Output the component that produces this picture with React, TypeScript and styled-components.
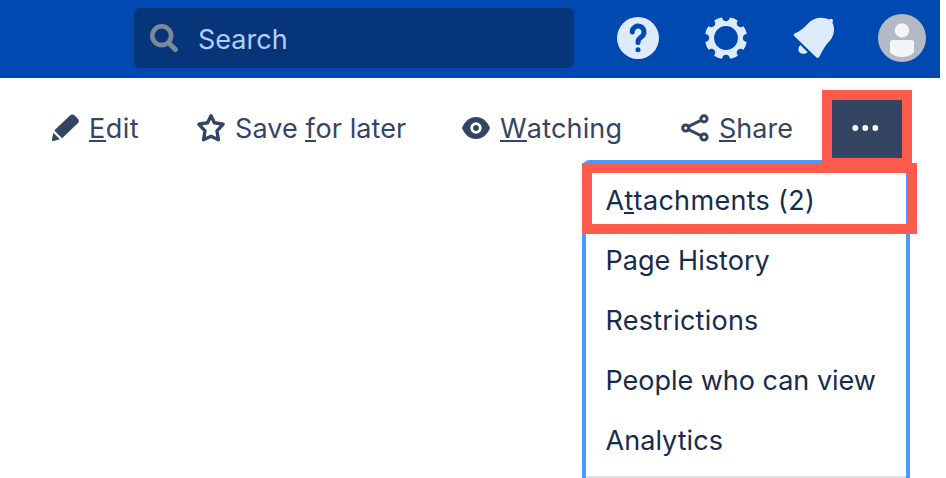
import React from "react";
import styled, { createGlobalStyle } from "styled-components";

const GlobalStyle = createGlobalStyle`
  *, *::before, *::after { box-sizing: border-box; }
  html, body { margin: 0; background: #fff; overflow: hidden; }
  body { font-family: Inter, "Liberation Sans", sans-serif; font-size: 27px; }
`;

const Page = styled.div`
  position: relative;
  width: 946px;
  height: 478px;
  overflow: hidden;
  background: #fff;
`;

const Header = styled.header`
  display: flex;
  align-items: center;
  width: 940px;
  height: 78px;
  padding: 0 14px 2px 134px;
  background: #0049b0;
  box-shadow: inset 0 -1px #0747a6;
`;

const SearchBox = styled.div`
  display: flex;
  align-items: center;
  width: 440px;
  height: 60px;
  padding-left: 15px;
  border-radius: 6px;
  background: #07357a;
  color: #b3cff5;
  svg { flex: none; margin-right: 19px; }
`;

const SearchText = styled.span`
  padding-top: 3px;
  line-height: 32px;
`;

const HeaderIcons = styled.div`
  display: flex;
  align-items: center;
  gap: 40px;
  margin-left: 40px;
  svg { display: block; flex: none; }
`;

const Toolbar = styled.nav`
  display: flex;
  height: 100px;
  padding-top: 12px;
  color: #344563;
`;

const Action = styled.div<{ $width: number; $gap: number }>`
  display: flex;
  align-items: center;
  flex: none;
  width: ${(p) => p.$width}px;
  height: 76px;
  gap: ${(p) => p.$gap}px;
  svg { flex: none; }
`;

const Actions = styled.div`
  display: flex;
  width: 822px;
  padding-left: 50px;
`;

const Label = styled.span<{ $spacing: number }>`
  padding-top: 2px;
  white-space: nowrap;
  line-height: 32px;
  letter-spacing: ${(p) => p.$spacing}px;
`;

const AccessKey = styled.span`
  display: inline-block;
  height: 32px;
  background: linear-gradient(currentColor, currentColor) 0 27px / 100% 2px no-repeat;
`;

const MoreButton = styled.button`
  position: relative;
  z-index: 1;
  display: flex;
  align-items: center;
  justify-content: center;
  width: 90px;
  height: 78px;
  padding: 0 4px 2px 0;
  border: 10px solid #ff5a4b;
  background: #344563;
`;

const Menu = styled.ul`
  position: absolute;
  left: 582px;
  top: 160px;
  width: 328px;
  height: 340px;
  margin: 0;
  padding: 7px 0 0;
  list-style: none;
  border: solid #4c9aff;
  border-width: 3px 4px;
  border-radius: 8px;
  background: #fff;
  color: #172b4d;
`;

const MenuItem = styled.li`
  display: flex;
  align-items: center;
  height: 60px;
  padding-left: 19.5px;
`;

const Divider = styled.li`
  height: 2px;
  margin-top: 6px;
  background: #dfe1e6;
`;

const Highlight = styled.div`
  position: absolute;
  left: 582px;
  top: 163px;
  width: 335px;
  height: 71px;
  border: 10px solid #ff5a4b;
`;

const SearchIcon = () => (
  <svg width="30" height="30" viewBox="0 0 30 30" fill="none" stroke="#7b899c" strokeLinecap="round">
    <circle cx="12.7" cy="12.7" r="9.4" strokeWidth="4.6" />
    <path d="M20 20.2L26.4 26.6" strokeWidth="5" />
  </svg>
);

const HelpIcon = () => (
  <svg width="48" height="48" viewBox="0 0 48 48">
    <circle cx="24" cy="24" r="21" fill="#deebff" />
    <path d="M18.2 18a5.9 5.9 0 1 1 9.9 4.3c-2 2-4.1 2.5-4.1 5.5v.8" fill="none" stroke="#0049b0" strokeWidth="5" strokeLinecap="round" />
    <circle cx="24" cy="35.7" r="2.5" fill="#0049b0" />
  </svg>
);

const GearIcon = () => (
  <svg width="48" height="48" viewBox="-24 -24 48 48">
    <circle r="16.5" fill="none" stroke="#deebff" strokeWidth="9.2" />
    {[0, 45, 90, 135, 180, 225, 270, 315].map((a) => (
      <path key={a} transform={`rotate(${a})`} d="M-5 -24L-3.9 -20.2Q-3 -16.8 0 -16.8T3.9 -20.2L5 -24Z" fill="#0049b0" />
    ))}
  </svg>
);

const BellIcon = () => (
  <svg width="48" height="48" viewBox="790 14 48 48" fill="#deebff">
    <path d="M794.2 33.8C800 31.5 804.5 27.5 808 23.5C813.5 17 822.5 16.2 829.2 19.6Q831.2 18.2 832.5 19.2Q833.6 20.5 832.4 22.8C835 28 834.6 34.5 830.3 40.2C825.3 45 822.4 50.5 819.5 56.5Q818 59 816.2 57.3L794.2 36.1Q793 34.8 794.2 33.8Z" />
    <path d="M800.4 45L807.6 52.2C803.5 55.4 798.5 53.2 798.4 49.4Q798.4 46.6 800.4 45Z" />
  </svg>
);

const AvatarIcon = () => (
  <svg width="48" height="48" viewBox="0 0 48 48">
    <circle cx="24" cy="24" r="24" fill="#b3bac5" />
    <circle cx="24" cy="16.5" r="7.2" fill="#f4f5f7" />
    <path d="M12 28.5Q12 26 14.5 26H33.5Q36 26 36 28.5V38.5Q31 43 24 43T12 38.5Z" fill="#f4f5f7" />
  </svg>
);

const PencilIcon = () => (
  <svg width="32" height="32" viewBox="50 112 32 32" fill="#344563">
    <path d="M69.7 115.8Q72.4 113.5 74.7 115.6L77.6 118.4Q80.1 120.8 77.8 123.3L62.1 138.3L54.2 130.6Z" />
    <path d="M53.3 132.7L59.9 139.2L53.7 141Q51.5 141.3 52 139.2Z" />
  </svg>
);

const StarIcon = () => (
  <svg width="32" height="32" viewBox="195 112 32 32" fill="none" stroke="#344563" strokeWidth="3.4" strokeLinejoin="round">
    <path d="M211 115.8L214.4 122.8L223.1 124.3L217 130.8L218.4 139.7L211 136.3L203.6 139.7L205 130.8L198.9 124.3L207.6 122.8Z" />
  </svg>
);

const EyeIcon = () => (
  <svg width="32" height="32" viewBox="460 112 32 32">
    <path d="M462 128C464.5 121.5 469.5 117 476 117S487.5 121.5 490 128C487.5 134.5 482.5 139 476 139S464.5 134.5 462 128Z" fill="#344563" />
    <circle cx="476" cy="128" r="4.3" fill="none" stroke="#fff" strokeWidth="2.8" />
  </svg>
);

const ShareIcon = () => (
  <svg width="32" height="32" viewBox="679 112 32 32" fill="none" stroke="#344563" strokeWidth="3">
    <circle cx="685.7" cy="128" r="3.1" />
    <circle cx="704" cy="118.8" r="3.1" />
    <circle cx="704" cy="137" r="3.1" />
    <path d="M688.5 126.4L701 120.3M688.5 129.6L701 135.6" />
  </svg>
);

const DotsIcon = () => (
  <svg width="28" height="8" viewBox="0 0 28 8" fill="#fff">
    <circle cx="4.3" cy="4" r="2.9" />
    <circle cx="14.3" cy="4" r="2.9" />
    <circle cx="24.3" cy="4" r="2.9" />
  </svg>
);

const menuItems = [
  { text: "Page History", spacing: 0.05 },
  { text: "Restrictions", spacing: 0.25 },
  { text: "People who can view", spacing: -0.02 },
  { text: "Analytics", spacing: 0.05 },
];

export default function App() {
  return (
    <>
      <GlobalStyle />
      <Page>
        <Header>
          <SearchBox>
            <SearchIcon />
            <SearchText>Search</SearchText>
          </SearchBox>
          <HeaderIcons>
            <HelpIcon />
            <GearIcon />
            <BellIcon />
            <AvatarIcon />
          </HeaderIcons>
        </Header>
        <Toolbar>
          <Actions>
            <Action $width={145} $gap={7}>
              <PencilIcon />
              <Label $spacing={0.5}><AccessKey>E</AccessKey>dit</Label>
            </Action>
            <Action $width={265} $gap={8}>
              <StarIcon />
              <Label $spacing={0.08}>Save <AccessKey>f</AccessKey>or later</Label>
            </Action>
            <Action $width={219} $gap={8}>
              <EyeIcon />
              <Label $spacing={0.18}><AccessKey>W</AccessKey>atching</Label>
            </Action>
            <Action $width={120} $gap={8}>
              <ShareIcon />
              <Label $spacing={0}><AccessKey>S</AccessKey>hare</Label>
            </Action>
          </Actions>
          <MoreButton aria-label="More actions"><DotsIcon /></MoreButton>
        </Toolbar>
        <Menu>
          <MenuItem><Label $spacing={0.32}>A<AccessKey>t</AccessKey>tachments (2)</Label></MenuItem>
          {menuItems.map((item) => (
            <MenuItem key={item.text}><Label $spacing={item.spacing}>{item.text}</Label></MenuItem>
          ))}
          <Divider />
        </Menu>
        <Highlight />
      </Page>
    </>
  );
}
